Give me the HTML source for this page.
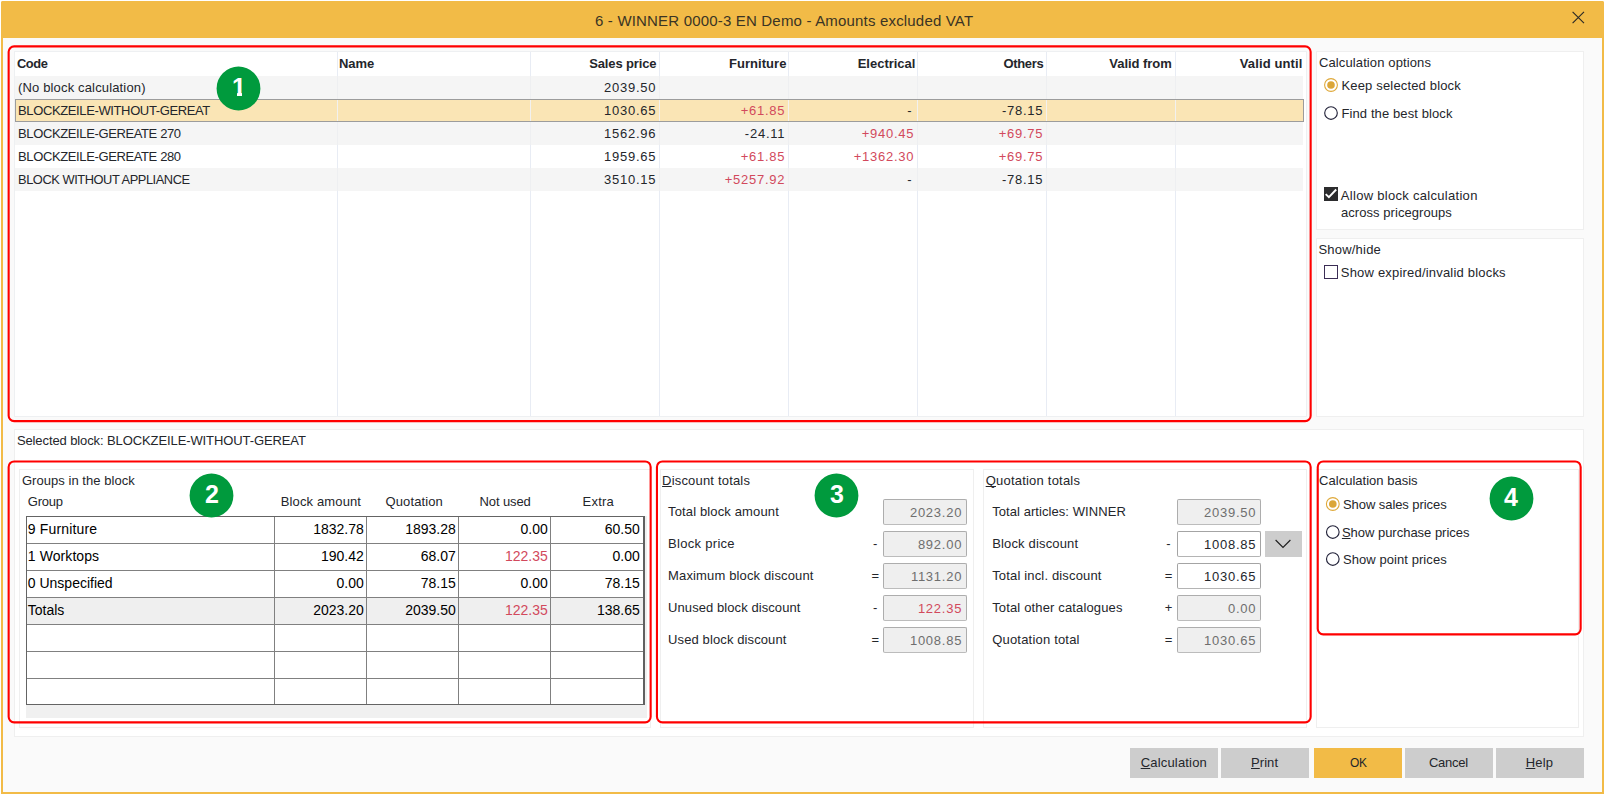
<!DOCTYPE html>
<html lang="en"><head><meta charset="utf-8"><title>Block calculation</title>
<style>
html,body{margin:0;padding:0;background:#fff;}
body{width:1605px;height:795px;overflow:hidden;font-family:"Liberation Sans",sans-serif;font-size:13px;color:#24262b;}
#win{position:absolute;left:0;top:0;width:1605px;height:795px;overflow:hidden;}
#win div{position:absolute;box-sizing:border-box;}
#win svg{position:absolute;overflow:visible;}
.t{position:absolute;white-space:pre;line-height:21px;height:21px;}
.b{font-weight:700;}
.g{color:#6e6e6e;}
.p{color:#d2495c;}
.a{font-size:14px;color:#000;line-height:20px;height:20px;}
#win .bd{width:44px;height:44px;color:#fff;font-weight:700;font-size:25px;line-height:40px;text-align:center;}
u{text-decoration:underline;text-underline-offset:1px;text-decoration-skip-ink:none;text-decoration-thickness:1px;}
</style></head><body>
<div id="win">
<div style="left:1px;top:1px;width:1603px;height:793px;background:#fafafa;border:2px solid #f2bb47;border-radius:2px 2px 0 0;"></div>
<div style="left:1px;top:1px;width:1603px;height:37px;background:#f2bb47;border-radius:2px 2px 0 0;"></div>
<svg style="left:1572px;top:11px" width="13" height="13" viewBox="0 0 13 13"><path d="M0.6 0.9 L12 12.1 M12 0.9 L0.6 12.1" stroke="#2b2a26" stroke-width="1.15" fill="none"/></svg>
<div style="left:14px;top:51px;width:1293px;height:366px;background:#fff;border:1px solid #eef0f2;"></div>
<div style="left:15px;top:76px;width:1288px;height:23px;background:#f5f5f5;"></div>
<div style="left:15px;top:122px;width:1288px;height:23px;background:#f5f5f5;"></div>
<div style="left:15px;top:168px;width:1288px;height:23px;background:#f5f5f5;"></div>
<div style="left:15px;top:99px;width:1289px;height:23px;background:#fae5b5;border:1px solid #9c9c9c;"></div>
<div style="left:337px;top:52px;width:1px;height:47px;background:#e8ecf4;"></div>
<div style="left:337px;top:122px;width:1px;height:294px;background:#e8ecf4;"></div>
<div style="left:337px;top:76px;width:1px;height:23px;background:#eeeff1;"></div>
<div style="left:337px;top:122px;width:1px;height:23px;background:#eeeff1;"></div>
<div style="left:337px;top:168px;width:1px;height:23px;background:#eeeff1;"></div>
<div style="left:337px;top:100px;width:1px;height:21px;background:#f2f1ef;"></div>
<div style="left:530px;top:52px;width:1px;height:47px;background:#e8ecf4;"></div>
<div style="left:530px;top:122px;width:1px;height:294px;background:#e8ecf4;"></div>
<div style="left:530px;top:76px;width:1px;height:23px;background:#eeeff1;"></div>
<div style="left:530px;top:122px;width:1px;height:23px;background:#eeeff1;"></div>
<div style="left:530px;top:168px;width:1px;height:23px;background:#eeeff1;"></div>
<div style="left:530px;top:100px;width:1px;height:21px;background:#f2f1ef;"></div>
<div style="left:659px;top:52px;width:1px;height:47px;background:#e8ecf4;"></div>
<div style="left:659px;top:122px;width:1px;height:294px;background:#e8ecf4;"></div>
<div style="left:659px;top:76px;width:1px;height:23px;background:#eeeff1;"></div>
<div style="left:659px;top:122px;width:1px;height:23px;background:#eeeff1;"></div>
<div style="left:659px;top:168px;width:1px;height:23px;background:#eeeff1;"></div>
<div style="left:659px;top:100px;width:1px;height:21px;background:#f2f1ef;"></div>
<div style="left:788px;top:52px;width:1px;height:47px;background:#e8ecf4;"></div>
<div style="left:788px;top:122px;width:1px;height:294px;background:#e8ecf4;"></div>
<div style="left:788px;top:76px;width:1px;height:23px;background:#eeeff1;"></div>
<div style="left:788px;top:122px;width:1px;height:23px;background:#eeeff1;"></div>
<div style="left:788px;top:168px;width:1px;height:23px;background:#eeeff1;"></div>
<div style="left:788px;top:100px;width:1px;height:21px;background:#f2f1ef;"></div>
<div style="left:917px;top:52px;width:1px;height:47px;background:#e8ecf4;"></div>
<div style="left:917px;top:122px;width:1px;height:294px;background:#e8ecf4;"></div>
<div style="left:917px;top:76px;width:1px;height:23px;background:#eeeff1;"></div>
<div style="left:917px;top:122px;width:1px;height:23px;background:#eeeff1;"></div>
<div style="left:917px;top:168px;width:1px;height:23px;background:#eeeff1;"></div>
<div style="left:917px;top:100px;width:1px;height:21px;background:#f2f1ef;"></div>
<div style="left:1046px;top:52px;width:1px;height:47px;background:#e8ecf4;"></div>
<div style="left:1046px;top:122px;width:1px;height:294px;background:#e8ecf4;"></div>
<div style="left:1046px;top:76px;width:1px;height:23px;background:#eeeff1;"></div>
<div style="left:1046px;top:122px;width:1px;height:23px;background:#eeeff1;"></div>
<div style="left:1046px;top:168px;width:1px;height:23px;background:#eeeff1;"></div>
<div style="left:1046px;top:100px;width:1px;height:21px;background:#f2f1ef;"></div>
<div style="left:1175px;top:52px;width:1px;height:47px;background:#e8ecf4;"></div>
<div style="left:1175px;top:122px;width:1px;height:294px;background:#e8ecf4;"></div>
<div style="left:1175px;top:76px;width:1px;height:23px;background:#eeeff1;"></div>
<div style="left:1175px;top:122px;width:1px;height:23px;background:#eeeff1;"></div>
<div style="left:1175px;top:168px;width:1px;height:23px;background:#eeeff1;"></div>
<div style="left:1175px;top:100px;width:1px;height:21px;background:#f2f1ef;"></div>
<div style="left:1316px;top:51px;width:268px;height:179px;background:#fff;border:1px solid #efefef;"></div>
<div style="left:1316px;top:238px;width:268px;height:179px;background:#fff;border:1px solid #efefef;"></div>
<svg style="left:1323px;top:77px" width="17" height="17"><circle cx="8" cy="8" r="6.4" fill="#fff" stroke="#dfa93a" stroke-width="1.1"/><circle cx="8" cy="8" r="3.8" fill="#dba638"/></svg>
<svg style="left:1323px;top:105px" width="17" height="17"><circle cx="8" cy="8" r="6.3" fill="#fff" stroke="#23233a" stroke-width="1.15"/></svg>
<svg style="left:1324px;top:187px" width="14" height="14" viewBox="0 0 14 14"><rect x="0" y="0" width="14" height="14" fill="#2c2c2e"/><path d="M1.7 7.1 L4.9 10.2 L12.2 2.5" stroke="#fff" stroke-width="1.9" fill="none"/></svg>
<div style="left:1324px;top:265px;width:14px;height:14px;background:#fff;border:1px solid #3b2d55;"></div>
<div style="left:14px;top:429px;width:1570px;height:308px;background:#fff;border:1px solid #efefef;"></div>
<div style="left:19px;top:469px;width:632px;height:259px;background:#fff;border:1px solid #efefef;"></div>
<div style="left:26px;top:516px;width:621px;height:202px;background:#f0f0f0;"></div>
<div style="left:26px;top:516px;width:619px;height:189px;background:#fff;border:1px solid #646464;border-right:2px solid #606060;"></div>
<div style="left:27px;top:598px;width:616px;height:26px;background:#efefef;"></div>
<div style="left:27px;top:543px;width:616px;height:1px;background:#808080;"></div>
<div style="left:27px;top:570px;width:616px;height:1px;background:#808080;"></div>
<div style="left:27px;top:597px;width:616px;height:1px;background:#808080;"></div>
<div style="left:27px;top:624px;width:616px;height:1px;background:#808080;"></div>
<div style="left:27px;top:651px;width:616px;height:1px;background:#808080;"></div>
<div style="left:27px;top:678px;width:616px;height:1px;background:#808080;"></div>
<div style="left:274px;top:517px;width:1px;height:187px;background:#808080;"></div>
<div style="left:366px;top:517px;width:1px;height:187px;background:#808080;"></div>
<div style="left:458px;top:517px;width:1px;height:187px;background:#808080;"></div>
<div style="left:550px;top:517px;width:1px;height:187px;background:#808080;"></div>
<div style="left:660px;top:469px;width:314px;height:259px;background:#fff;border:1px solid #efefef;"></div>
<div style="left:883px;top:499px;width:84px;height:26px;background:#efefef;border:1px solid #adadad;border-bottom-color:#bcbcbc;border-radius:2px;"></div>
<div style="left:883px;top:531px;width:84px;height:26px;background:#efefef;border:1px solid #adadad;border-bottom-color:#bcbcbc;border-radius:2px;"></div>
<div style="left:883px;top:563px;width:84px;height:26px;background:#efefef;border:1px solid #adadad;border-bottom-color:#bcbcbc;border-radius:2px;"></div>
<div style="left:883px;top:595px;width:84px;height:26px;background:#efefef;border:1px solid #adadad;border-bottom-color:#bcbcbc;border-radius:2px;"></div>
<div style="left:883px;top:627px;width:84px;height:26px;background:#efefef;border:1px solid #adadad;border-bottom-color:#bcbcbc;border-radius:2px;"></div>
<div style="left:983px;top:469px;width:324px;height:259px;background:#fff;border:1px solid #efefef;"></div>
<div style="left:1177px;top:499px;width:84px;height:26px;background:#efefef;border:1px solid #adadad;border-bottom-color:#bcbcbc;border-radius:2px;"></div>
<div style="left:1177px;top:531px;width:84px;height:26px;background:#fff;border:1px solid #a4a4a4;border-bottom-color:#b4b4b4;border-radius:2px;"></div>
<div style="left:1177px;top:563px;width:84px;height:26px;background:#fff;border:1px solid #a4a4a4;border-bottom-color:#b4b4b4;border-radius:2px;"></div>
<div style="left:1177px;top:595px;width:84px;height:26px;background:#efefef;border:1px solid #adadad;border-bottom-color:#bcbcbc;border-radius:2px;"></div>
<div style="left:1177px;top:627px;width:84px;height:26px;background:#efefef;border:1px solid #adadad;border-bottom-color:#bcbcbc;border-radius:2px;"></div>
<div style="left:1265px;top:531px;width:37px;height:26px;background:#cdcdcd;"></div>
<svg style="left:1275px;top:539px" width="16" height="10" viewBox="0 0 16 10"><path d="M0.6 1 L8 8.4 L15.4 1" stroke="#1e1e1e" stroke-width="1.15" fill="none"/></svg>
<div style="left:1316px;top:469px;width:263px;height:259px;background:#fff;border:1px solid #efefef;"></div>
<svg style="left:1324px;top:496px" width="17" height="17"><circle cx="8.8" cy="8" r="6.4" fill="#fff" stroke="#dfa93a" stroke-width="1.1"/><circle cx="8.8" cy="8" r="3.8" fill="#dba638"/></svg>
<svg style="left:1324px;top:524px" width="17" height="17"><circle cx="8.8" cy="8" r="6.3" fill="#fff" stroke="#23233a" stroke-width="1.15"/></svg>
<svg style="left:1324px;top:551px" width="17" height="17"><circle cx="8.8" cy="8" r="6.3" fill="#fff" stroke="#23233a" stroke-width="1.15"/></svg>
<div style="left:1130px;top:748px;width:88px;height:30px;background:#cdcdcd;"></div>
<div style="left:1221px;top:748px;width:88px;height:30px;background:#cdcdcd;"></div>
<div style="left:1314px;top:748px;width:88px;height:30px;background:#f2bb47;"></div>
<div style="left:1405px;top:748px;width:88px;height:30px;background:#cdcdcd;"></div>
<div style="left:1496px;top:748px;width:88px;height:30px;background:#cdcdcd;"></div>
<svg style="left:6px;top:44px" width="1307" height="380"><rect x="2.65" y="2.35" width="1302" height="374.8" rx="5.5" ry="5.5" fill="none" stroke="#ff0000" stroke-width="2.1"/></svg>
<svg style="left:6px;top:459px" width="647" height="266"><rect x="2.65" y="2.45" width="642" height="260.9" rx="5.5" ry="5.5" fill="none" stroke="#ff0000" stroke-width="2.1"/></svg>
<svg style="left:654px;top:459px" width="659" height="266"><rect x="2.95" y="2.45" width="653.7" height="260.9" rx="5.5" ry="5.5" fill="none" stroke="#ff0000" stroke-width="2.1"/></svg>
<svg style="left:1315px;top:459px" width="268" height="178"><rect x="2.75" y="2.45" width="262.9" height="172.9" rx="5.5" ry="5.5" fill="none" stroke="#ff0000" stroke-width="2.1"/></svg>
<svg style="left:215px;top:65px" width="48" height="48"><circle cx="23.5" cy="23.5" r="21.9" fill="#009a3d"/></svg>
<div class="bd" style="left:217px;top:67px">1</div>
<div style="left:231px;top:93px;width:6px;height:5px;background:#009a3d;"></div>
<div style="left:242px;top:93px;width:6px;height:5px;background:#009a3d;"></div>
<svg style="left:188px;top:472px" width="48" height="48"><circle cx="23.5" cy="23.5" r="21.9" fill="#009a3d"/></svg>
<div class="bd" style="left:190px;top:474px">2</div>
<svg style="left:813px;top:472px" width="48" height="48"><circle cx="23.5" cy="23.5" r="21.9" fill="#009a3d"/></svg>
<div class="bd" style="left:815px;top:474px">3</div>
<svg style="left:1488px;top:475px" width="48" height="48"><circle cx="23.5" cy="23.5" r="21.9" fill="#009a3d"/></svg>
<div class="bd" style="left:1489px;top:477px">4</div>
<span class="t" style="top:10px;left:595px;font-size:15px;letter-spacing:0.181px;color:#3a3424">6 - WINNER 0000-3 EN Demo - Amounts excluded VAT</span>
<span class="t b" style="top:53px;left:17px;letter-spacing:-0.450px;transform:scaleX(0.9887);transform-origin:left">Code</span>
<span class="t b" style="top:53px;left:339px;letter-spacing:-0.041px">Name</span>
<span class="t b" style="top:53px;right:948.636px;letter-spacing:-0.136px">Sales price</span>
<span class="t b" style="top:53px;right:818.545px;letter-spacing:0.055px">Furniture</span>
<span class="t b" style="top:53px;right:689.614px;letter-spacing:-0.014px">Electrical</span>
<span class="t b" style="top:53px;right:561.641px;letter-spacing:-0.341px">Others</span>
<span class="t b" style="top:53px;right:433.351px;letter-spacing:-0.051px">Valid from</span>
<span class="t b" style="top:53px;right:302.471px;letter-spacing:0.129px">Valid until</span>
<span class="t" style="top:77px;left:18px;letter-spacing:0.153px">(No block calculation)</span>
<span class="t" style="top:77px;right:948.75px;letter-spacing:0.750px">2039.50</span>
<span class="t" style="top:100px;left:18px;letter-spacing:-0.374px">BLOCKZEILE-WITHOUT-GEREAT</span>
<span class="t" style="top:100px;right:948.75px;letter-spacing:0.750px">1030.65</span>
<span class="t p" style="top:100px;right:819.75px;letter-spacing:0.750px">+61.85</span>
<span class="t" style="top:100px;right:693.5px">-</span>
<span class="t" style="top:100px;right:561.75px;letter-spacing:0.750px">-78.15</span>
<span class="t" style="top:123px;left:18px;letter-spacing:-0.376px">BLOCKZEILE-GEREATE 270</span>
<span class="t" style="top:123px;right:948.75px;letter-spacing:0.750px">1562.96</span>
<span class="t" style="top:123px;right:819.75px;letter-spacing:0.750px">-24.11</span>
<span class="t p" style="top:123px;right:690.75px;letter-spacing:0.750px">+940.45</span>
<span class="t p" style="top:123px;right:561.75px;letter-spacing:0.750px">+69.75</span>
<span class="t" style="top:146px;left:18px;letter-spacing:-0.376px">BLOCKZEILE-GEREATE 280</span>
<span class="t" style="top:146px;right:948.75px;letter-spacing:0.750px">1959.65</span>
<span class="t p" style="top:146px;right:819.75px;letter-spacing:0.750px">+61.85</span>
<span class="t p" style="top:146px;right:690.75px;letter-spacing:0.750px">+1362.30</span>
<span class="t p" style="top:146px;right:561.75px;letter-spacing:0.750px">+69.75</span>
<span class="t" style="top:169px;left:18px;letter-spacing:-0.450px;transform:scaleX(0.9887);transform-origin:left">BLOCK WITHOUT APPLIANCE</span>
<span class="t" style="top:169px;right:948.75px;letter-spacing:0.750px">3510.15</span>
<span class="t p" style="top:169px;right:819.75px;letter-spacing:0.750px">+5257.92</span>
<span class="t" style="top:169px;right:693.5px">-</span>
<span class="t" style="top:169px;right:561.75px;letter-spacing:0.750px">-78.15</span>
<span class="t" style="top:52px;left:1319px;letter-spacing:0.113px">Calculation options</span>
<span class="t" style="top:239px;left:1318.5px;letter-spacing:0.198px">Show/hide</span>
<span class="t" style="top:75px;left:1341.5px;letter-spacing:0.163px">Keep selected block</span>
<span class="t" style="top:103px;left:1341.5px;letter-spacing:0.099px">Find the best block</span>
<span class="t" style="top:185px;left:1340.8px;letter-spacing:0.296px">Allow block calculation</span>
<span class="t" style="top:202px;left:1341px;letter-spacing:0.057px">across pricegroups</span>
<span class="t" style="top:262px;left:1340.8px;letter-spacing:0.196px">Show expired/invalid blocks</span>
<span class="t" style="top:430px;left:16.9px;letter-spacing:-0.102px">Selected block: BLOCKZEILE-WITHOUT-GEREAT</span>
<span class="t" style="top:470px;left:21.9px;letter-spacing:0.049px">Groups in the block</span>
<span class="t" style="top:491px;left:27.8px;letter-spacing:-0.210px">Group</span>
<span class="t" style="top:491px;left:280.7px;letter-spacing:0.139px">Block amount</span>
<span class="t" style="top:491px;left:385.5px;letter-spacing:0.116px">Quotation</span>
<span class="t" style="top:491px;left:479.5px;letter-spacing:-0.107px">Not used</span>
<span class="t" style="top:491px;left:582.5px;letter-spacing:0.239px">Extra</span>
<span class="t a" style="top:519px;left:27.8px;letter-spacing:0.160px">9 Furniture</span>
<span class="t a" style="top:519px;right:1241.2px">1832.78</span>
<span class="t a" style="top:519px;right:1149.2px">1893.28</span>
<span class="t a" style="top:519px;right:1057.2px">0.00</span>
<span class="t a" style="top:519px;right:965.2px">60.50</span>
<span class="t a" style="top:546px;left:27.8px;letter-spacing:0.084px">1 Worktops</span>
<span class="t a" style="top:546px;right:1241.2px">190.42</span>
<span class="t a" style="top:546px;right:1149.2px">68.07</span>
<span class="t a" style="top:546px;right:1057.2px;color:#d2495c">122.35</span>
<span class="t a" style="top:546px;right:965.2px">0.00</span>
<span class="t a" style="top:573px;left:27.8px">0 Unspecified</span>
<span class="t a" style="top:573px;right:1241.2px">0.00</span>
<span class="t a" style="top:573px;right:1149.2px">78.15</span>
<span class="t a" style="top:573px;right:1057.2px">0.00</span>
<span class="t a" style="top:573px;right:965.2px">78.15</span>
<span class="t a" style="top:600px;left:27.8px">Totals</span>
<span class="t a" style="top:600px;right:1241.2px">2023.20</span>
<span class="t a" style="top:600px;right:1149.2px">2039.50</span>
<span class="t a" style="top:600px;right:1057.2px;color:#d2495c">122.35</span>
<span class="t a" style="top:600px;right:965.2px">138.65</span>
<span class="t" style="top:470px;left:662.1px;letter-spacing:0.181px"><u>D</u>iscount totals</span>
<span class="t" style="top:501px;left:668.1px;letter-spacing:0.135px">Total block amount</span>
<span class="t g" style="top:502px;right:642.85px;letter-spacing:0.750px">2023.20</span>
<span class="t" style="top:533px;left:668.1px;letter-spacing:0.292px">Block price</span>
<span class="t" style="top:533px;left:873px">-</span>
<span class="t g" style="top:534px;right:642.85px;letter-spacing:0.750px">892.00</span>
<span class="t" style="top:565px;left:668.1px;letter-spacing:0.142px">Maximum block discount</span>
<span class="t" style="top:565px;left:871.5px">=</span>
<span class="t g" style="top:566px;right:642.85px;letter-spacing:0.750px">1131.20</span>
<span class="t" style="top:597px;left:668.1px;letter-spacing:0.074px">Unused block discount</span>
<span class="t" style="top:597px;left:873px">-</span>
<span class="t p" style="top:598px;right:642.85px;letter-spacing:0.750px">122.35</span>
<span class="t" style="top:629px;left:668.1px;letter-spacing:0.109px">Used block discount</span>
<span class="t" style="top:629px;left:871.5px">=</span>
<span class="t g" style="top:630px;right:642.85px;letter-spacing:0.750px">1008.85</span>
<span class="t" style="top:470px;left:985.7px;letter-spacing:0.215px"><u>Q</u>uotation totals</span>
<span class="t" style="top:501px;left:992.2px;letter-spacing:0.067px">Total articles: WINNER</span>
<span class="t g" style="top:502px;right:348.75px;letter-spacing:0.750px">2039.50</span>
<span class="t" style="top:533px;left:992.2px;letter-spacing:0.159px">Block discount</span>
<span class="t" style="top:533px;left:1166.2px">-</span>
<span class="t" style="top:534px;right:348.75px;letter-spacing:0.750px">1008.85</span>
<span class="t" style="top:565px;left:992.2px;letter-spacing:0.161px">Total incl. discount</span>
<span class="t" style="top:565px;left:1164.7px">=</span>
<span class="t" style="top:566px;right:348.75px;letter-spacing:0.750px">1030.65</span>
<span class="t" style="top:597px;left:992.2px;letter-spacing:0.147px">Total other catalogues</span>
<span class="t" style="top:597px;left:1164.7px">+</span>
<span class="t g" style="top:598px;right:348.75px;letter-spacing:0.750px">0.00</span>
<span class="t" style="top:629px;left:992.2px;letter-spacing:0.196px">Quotation total</span>
<span class="t" style="top:629px;left:1164.7px">=</span>
<span class="t g" style="top:630px;right:348.75px;letter-spacing:0.750px">1030.65</span>
<span class="t" style="top:470px;left:1319.1px;letter-spacing:0.014px">Calculation basis</span>
<span class="t" style="top:494px;left:1343px;letter-spacing:-0.068px">Show sales prices</span>
<span class="t" style="top:522px;left:1341.9px;letter-spacing:-0.016px"><u>S</u>how purchase prices</span>
<span class="t" style="top:549px;left:1343px;letter-spacing:0.067px">Show point prices</span>
<span class="t" style="top:752px;left:1140.7px;letter-spacing:0.177px"><u>C</u>alculation</span>
<span class="t" style="top:752px;left:1251px;letter-spacing:0.066px"><u>P</u>rint</span>
<span class="t" style="top:752px;left:1350.1px;letter-spacing:-0.450px;transform:scaleX(0.9198);transform-origin:left">OK</span>
<span class="t" style="top:752px;left:1428.9px;letter-spacing:-0.254px">Cancel</span>
<span class="t" style="top:752px;left:1525.7px;letter-spacing:0.217px"><u>H</u>elp</span>
</div>
</body></html>
